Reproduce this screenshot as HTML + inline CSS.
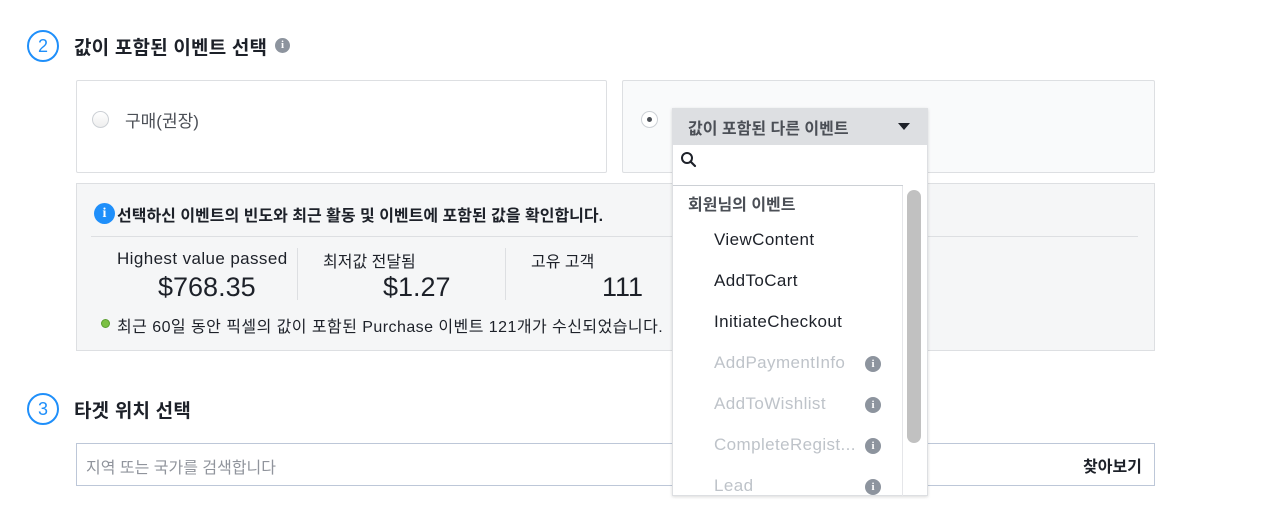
<!DOCTYPE html>
<html><head><meta charset="utf-8"><style>
*{box-sizing:border-box;margin:0;padding:0}
body{width:1280px;height:517px;background:#fff;font-family:"Liberation Sans","Noto Sans CJK KR",sans-serif;color:#1d2129;position:relative;overflow:hidden}
.a{position:absolute;white-space:nowrap}
.step{width:32px;height:32px;border:2px solid #1f8ffa;border-radius:50%;color:#1f8ffa;font-size:18px;text-align:center;line-height:28px}
.h{font-size:19px;font-weight:bold;color:#1d2129;letter-spacing:.2px}
.radio{width:17px;height:17px;border-radius:50%;border:1px solid #ccd0d5;background:linear-gradient(#fff,#eee)}
.ii{width:15px;height:15px;border-radius:50%;background:#8d949e;color:#fff;font-size:11px;font-weight:bold;text-align:center;line-height:15px;font-family:"Liberation Serif",serif}
.item{position:absolute;left:714px;font-size:17px;letter-spacing:.4px;color:#1d2129}
.g{color:#bec3c9}
.ig{left:865px;width:16px;height:16px;line-height:16px;background:#8d949e}
</style></head><body>
<div class="a step" style="left:27px;top:30px">2</div>
<div class="a h" style="left:74px;top:33px">값이 포함된 이벤트 선택</div>
<div class="a ii" style="left:275px;top:38px">i</div>

<div class="a" style="left:76px;top:80px;width:531px;height:93px;border:1px solid #dddfe2;border-radius:2px;background:#fff"></div>
<div class="a radio" style="left:92px;top:111px"></div>
<div class="a" style="left:125px;top:107px;font-size:17px;color:#4b4f56">구매(권장)</div>

<div class="a" style="left:622px;top:80px;width:533px;height:93px;border:1px solid #dddfe2;border-radius:2px;background:#f9fafb"></div>
<div class="a radio" style="left:641px;top:111px;background:#fff"></div>
<div class="a" style="left:647px;top:117px;width:5px;height:5px;border-radius:50%;background:#4b4f56"></div>

<div class="a" style="left:76px;top:183px;width:1079px;height:168px;border:1px solid #dddfe2;background:#f5f6f7"></div>
<div class="a" style="left:94px;top:203px;width:21px;height:21px;border-radius:50%;background:#1f8ffa;color:#fff;font-weight:bold;font-size:14px;text-align:center;line-height:21px;font-family:'Liberation Serif',serif">i</div>
<div class="a" style="left:117px;top:202px;font-size:16px;font-weight:bold;color:#1d2129">선택하신 이벤트의 빈도와 최근 활동 및 이벤트에 포함된 값을 확인합니다.</div>
<div class="a" style="left:91px;top:236px;width:1047px;height:1px;background:#dddfe2"></div>
<div class="a" style="left:117px;top:249px;font-size:17px;letter-spacing:.4px;color:#1d2129">Highest value passed</div>
<div class="a" style="left:158px;top:272px;font-size:27px;color:#1d2129">$768.35</div>
<div class="a" style="left:297px;top:248px;width:1px;height:52px;background:#dddfe2"></div>
<div class="a" style="left:323px;top:248px;font-size:16px">최저값 전달됨</div>
<div class="a" style="left:383px;top:272px;font-size:27px">$1.27</div>
<div class="a" style="left:505px;top:248px;width:1px;height:52px;background:#dddfe2"></div>
<div class="a" style="left:531px;top:248px;font-size:16px">고유 고객</div>
<div class="a" style="left:602px;top:272px;font-size:27px">111</div>
<div class="a" style="left:101px;top:319px;width:9px;height:9px;border-radius:50%;background:#7bc043;border:1px solid #5a9e2f"></div>
<div class="a" style="left:117px;top:313px;font-size:16px;letter-spacing:.45px;color:#1d2129">최근 60일 동안 픽셀의 값이 포함된 Purchase 이벤트 121개가 수신되었습니다.</div>

<div class="a step" style="left:27px;top:393px">3</div>
<div class="a h" style="left:74px;top:396px">타겟 위치 선택</div>
<div class="a" style="left:76px;top:443px;width:1079px;height:43px;border:1px solid #bdc7d8;background:#fff"></div>
<div class="a" style="left:86px;top:454px;font-size:16px;color:#90949c">지역 또는 국가를 검색합니다</div>
<div class="a" style="left:1083px;top:453px;font-size:16px;font-weight:bold;color:#1d2129">찾아보기</div>

<div class="a" style="left:672px;top:108px;width:256px;height:388px;background:#fff;border:1px solid #dddfe2;box-shadow:0 1px 3px rgba(0,0,0,.15)"></div>
<div class="a" style="left:672px;top:108px;width:256px;height:37px;background:#dddfe2;border-radius:2px 2px 0 0"></div>
<div class="a" style="left:688px;top:115px;font-size:16px;font-weight:bold;color:#4b4f56">값이 포함된 다른 이벤트</div>
<div class="a" style="left:898px;top:123px;width:0;height:0;border-left:6px solid transparent;border-right:6px solid transparent;border-top:7px solid #1d2129"></div>
<svg class="a" style="left:680px;top:151px" width="18" height="18" viewBox="0 0 18 18"><circle cx="7" cy="7" r="5" fill="none" stroke="#1d2129" stroke-width="2"/><path d="M10.5 10.5L15 15" stroke="#1d2129" stroke-width="2.2" stroke-linecap="round"/></svg>
<div class="a" style="left:673px;top:185px;width:230px;height:1px;background:#ccd0d5"></div>
<div class="a" style="left:902px;top:186px;width:1px;height:310px;background:#e5e6e9"></div>
<div class="a" style="left:907px;top:190px;width:14px;height:253px;border-radius:7px;background:#c1c1c1"></div>
<div class="a" style="left:688px;top:191px;font-size:16px;font-weight:bold;color:#4b4f56">회원님의 이벤트</div>
<div class="item" style="top:230px">ViewContent</div>
<div class="item" style="top:271px">AddToCart</div>
<div class="item" style="top:312px">InitiateCheckout</div>
<div class="item g" style="top:353px">AddPaymentInfo</div>
<div class="item g" style="top:394px">AddToWishlist</div>
<div class="item g" style="top:435px">CompleteRegist...</div>
<div class="item g" style="top:476px">Lead</div>
<div class="a ii ig" style="top:356px">i</div>
<div class="a ii ig" style="top:397px">i</div>
<div class="a ii ig" style="top:438px">i</div>
<div class="a ii ig" style="top:479px">i</div>
</body></html>
